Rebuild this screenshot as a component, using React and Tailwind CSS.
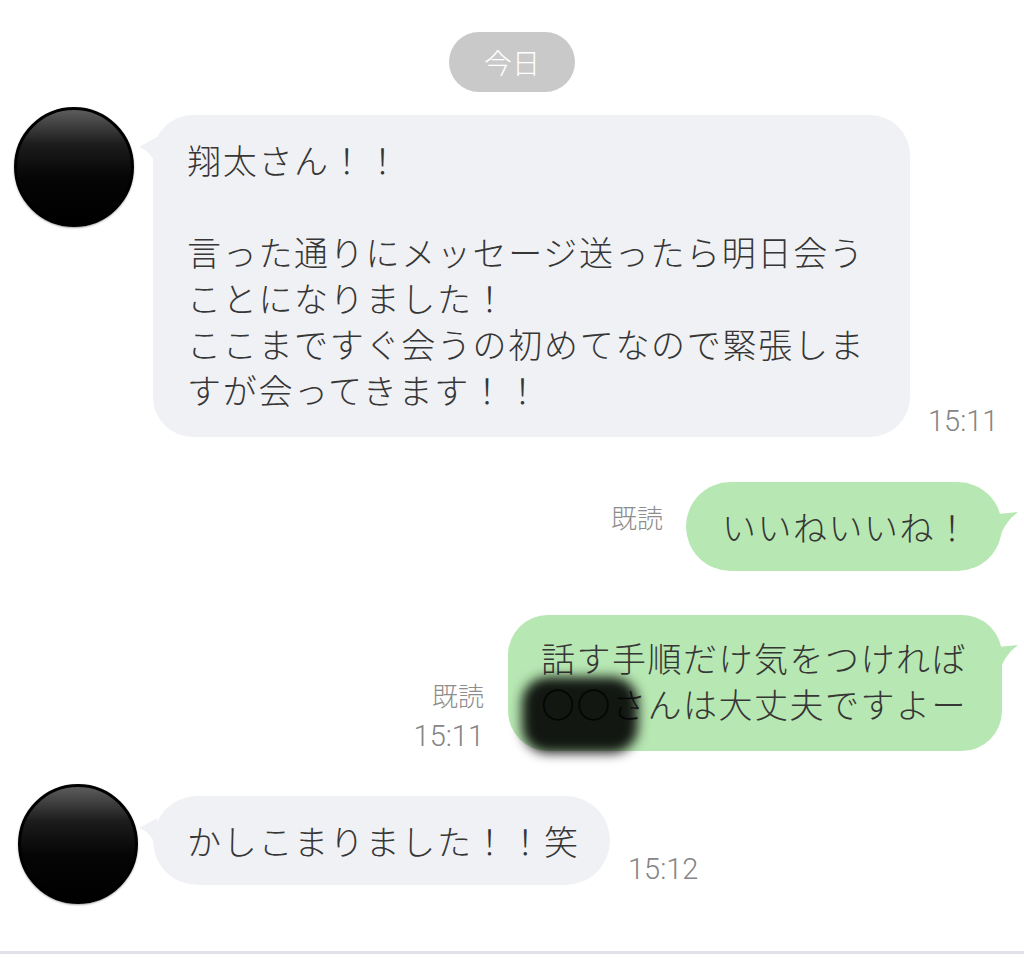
import React from 'react';

// ---------------------------------------------------------
// Small pieces
// ---------------------------------------------------------
const Avatar = () => (
  <div className="w-[120px] h-[120px] shrink-0 rounded-full border-[3px] border-black bg-[linear-gradient(180deg,#5c5c5c_0%,#1c1c1c_30%,#050505_60%,#000_100%)] shadow-[0_1px_2px_rgba(0,0,0,0.35)]" />
);

const GrayTail = () => (
  <svg className="absolute left-[-14px] top-[22px]" width="18" height="30" viewBox="0 0 18 30">
    <path d="M18 0 L0 10 Q12 14 18 30 Z" fill="#f0f1f4" />
  </svg>
);

const GreenTail = ({ top }) => (
  <svg className={`absolute right-[-16px] ${top}`} width="20" height="30" viewBox="0 0 20 30">
    <path d="M0 2 L20 0 Q6 10 0 30 Z" fill="#b7e7b2" />
  </svg>
);

const Time = ({ children, className = '' }) => (
  <div className={`text-[29px] leading-[30px] text-[#858585] font-light font-['Roboto',sans-serif] ${className}`}>
    {children}
  </div>
);

const ReadMark = ({ className = '' }) => (
  <div className={`text-[26px] leading-[30px] text-[#8d8d8d] font-light ${className}`}>既読</div>
);

// ---------------------------------------------------------
// Main Chat Component
// ---------------------------------------------------------
export default function App() {
  const firstLines = [
    '翔太さん！！',
    '',
    '言った通りにメッセージ送ったら明日会う',
    'ことになりました！',
    'ここまですぐ会うの初めてなので緊張しま',
    'すが会ってきます！！',
  ];

  return (
    <div className="w-[1024px] h-[958px] bg-white flex flex-col overflow-hidden text-[#363636] font-light font-['Noto_Sans_CJK_JP','Noto_Sans',sans-serif]">
      {/* Date pill */}
      <div className="flex justify-center mt-[32px]">
        <div className="h-[60px] w-[126px] rounded-full bg-[#c9c9c9] text-white text-[28px] flex items-center justify-center">
          今日
        </div>
      </div>

      {/* Incoming long message */}
      <div className="flex items-start pl-[14px] mt-[15px]">
        <Avatar />
        <div className="flex items-end ml-[19px] mt-[8px]">
          <div className="relative w-[757px] rounded-[40px] bg-[#f0f1f4] pl-[34px] pr-[20px] pt-[22px] pb-[24px] text-[34px] tracking-[1.7px]">
            <GrayTail />
            {firstLines.map((line, i) => (
              <div key={i} className="h-[46px] leading-[46px] whitespace-nowrap">{line}</div>
            ))}
          </div>
          <Time className="ml-[18px] mb-[1px]">15:11</Time>
        </div>
      </div>

      {/* Outgoing short */}
      <div className="flex justify-end items-start pr-[22px] mt-[45px]">
        <ReadMark className="mt-[20px] mr-[23px]" />
        <div className="relative h-[89px] w-[316px] rounded-[45px] bg-[#b7e7b2] pl-[36px] flex items-center text-[34px] tracking-[1.5px] whitespace-nowrap">
          <GreenTail top="top-[30px]" />
          いいねいいね！
        </div>
      </div>

      {/* Outgoing two lines */}
      <div className="flex justify-end items-end pr-[22px] mt-[44px]">
        <div className="flex flex-col items-end mr-[24px]">
          <ReadMark />
          <Time className="mt-[11px]">15:11</Time>
        </div>
        <div className="relative w-[494px] rounded-[40px] bg-[#b7e7b2] pl-[33px] pt-[20px] pb-[24px] text-[34px] tracking-[1.5px]">
          <GreenTail top="top-[30px]" />
          <div className="h-[46px] leading-[46px] whitespace-nowrap">話す手順だけ気をつければ</div>
          <div className="h-[46px] leading-[46px] whitespace-nowrap">〇〇さんは大丈夫ですよー</div>
          {/* redaction smudge */}
          <div className="absolute left-[14px] top-[62px] w-[116px] h-[76px] rounded-[26px] bg-black/90 blur-[6px]" />
        </div>
      </div>

      {/* Incoming short */}
      <div className="flex items-start pl-[18px] mt-[33px]">
        <Avatar />
        <div className="flex items-end ml-[15px] mt-[12px]">
          <div className="relative h-[89px] w-[457px] rounded-[45px] bg-[#f0f1f4] pl-[34px] flex items-center text-[34px] tracking-[1.7px] whitespace-nowrap">
            <GrayTail />
            かしこまりました！！笑
          </div>
          <Time className="ml-[18px] mb-[1px]">15:12</Time>
        </div>
      </div>

      <div className="flex-1" />
      <div className="h-[3px] bg-[#e1e1ea] mb-[4px]" />
    </div>
  );
}
